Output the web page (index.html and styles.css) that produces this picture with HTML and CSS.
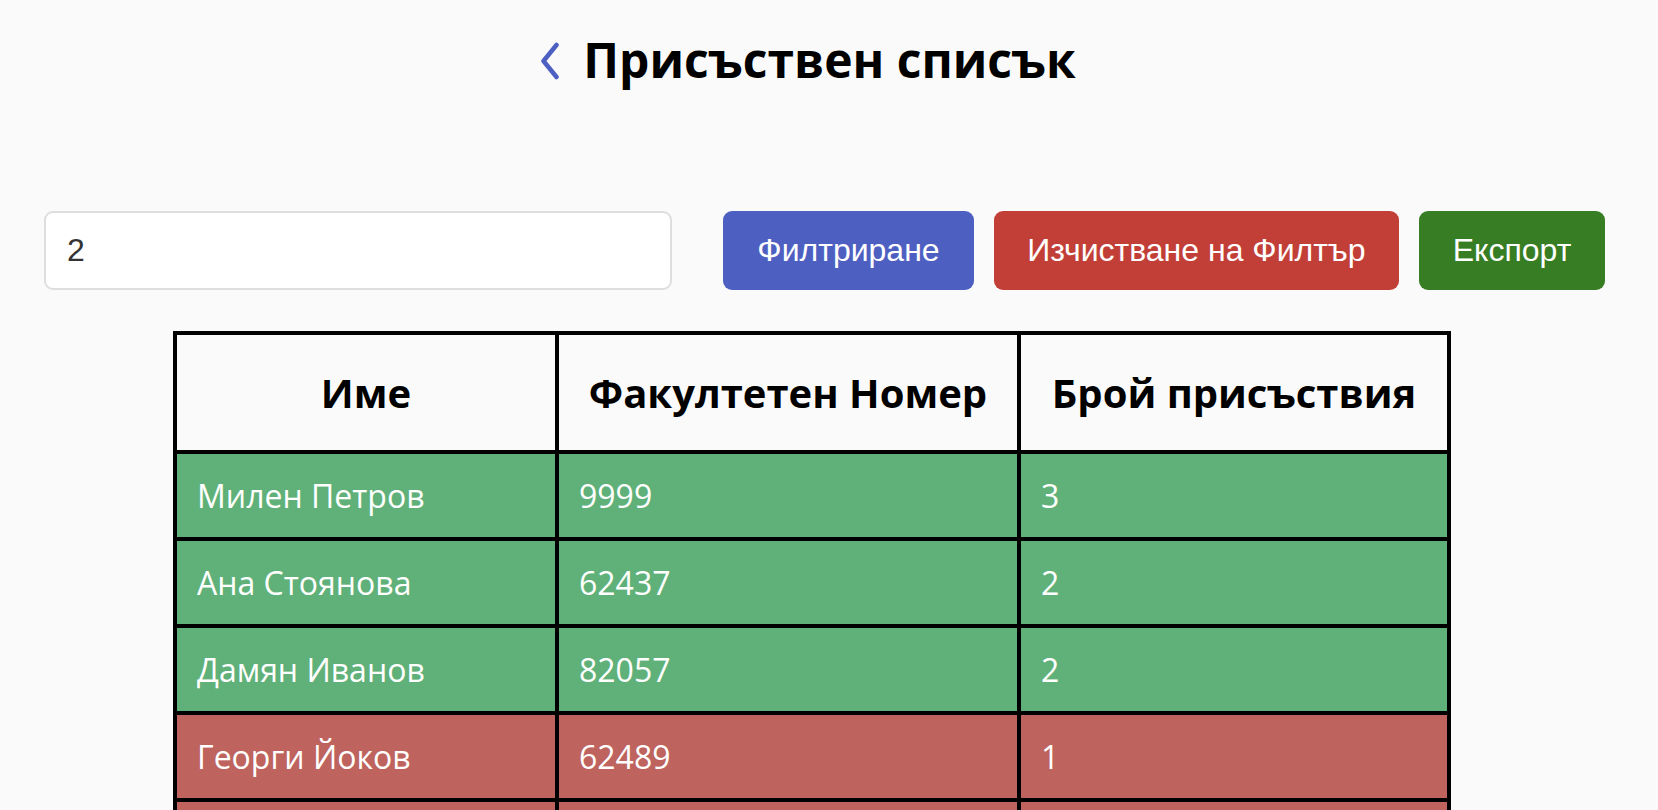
FILE: index.html
```html
<!DOCTYPE html>
<html lang="bg">
<head>
<meta charset="utf-8">
<title>Присъствен списък</title>
<link rel="stylesheet" href="styles.css">
</head>
<body>
<div class="page">
  <header class="header">
    <a class="back" href="#" aria-label="Назад">
      <svg width="20" height="38" viewBox="0 0 20 38"><path d="M16.5 3 L3.5 19 L16.5 35" fill="none" stroke="#4e5fc2" stroke-width="4.5" stroke-linecap="round" stroke-linejoin="round"/></svg>
    </a>
    <h1 class="title">Присъствен списък</h1>
  </header>

  <div class="toolbar">
    <input class="search" type="text" value="2">
    <div class="actions">
      <button class="btn btn-blue">Филтриране</button>
      <button class="btn btn-red">Изчистване на Филтър</button>
      <button class="btn btn-green">Експорт</button>
    </div>
  </div>

  <table class="list">
    <colgroup>
      <col class="c1"><col class="c2"><col class="c3">
    </colgroup>
    <thead>
      <tr><th>Име</th><th>Факултетен Номер</th><th>Брой присъствия</th></tr>
    </thead>
    <tbody>
      <tr class="ok"><td>Милен Петров</td><td>9999</td><td>3</td></tr>
      <tr class="ok"><td>Ана Стоянова</td><td>62437</td><td>2</td></tr>
      <tr class="ok"><td>Дамян Иванов</td><td>82057</td><td>2</td></tr>
      <tr class="bad"><td>Георги Йоков</td><td>62489</td><td>1</td></tr>
      <tr class="bad"><td></td><td></td><td></td></tr>
    </tbody>
  </table>
</div>
</body>
</html>
```

FILE: styles.css
```css
html, body {
  margin: 0;
  background: #fafafa;
}
body {
  font-family: "Open Sans", "Liberation Sans", sans-serif;
  color: #000;
}
.page {
  width: 1620px;
}
.header {
  display: flex;
  justify-content: center;
  align-items: center;
  gap: 23px;
  height: 120px;
  padding-right: 4px;
}
.back {
  display: flex;
  align-items: center;
  margin-top: 2px;
}
.title {
  margin: 0;
  font-size: 48px;
  font-weight: 700;
  line-height: 1;
}
.toolbar {
  display: flex;
  align-items: center;
  padding: 91px 0 0 44px;
  gap: 51px;
}
.search {
  box-sizing: border-box;
  width: 628px;
  height: 79px;
  border: 2px solid #dedede;
  border-radius: 9px;
  background: #fff;
  padding: 0 21px;
  font-family: "Liberation Sans", Arial, sans-serif;
  font-size: 32px;
  color: #333;
  outline: none;
}
.actions {
  display: flex;
  gap: 20px;
}
.btn {
  height: 79px;
  border: 0;
  border-radius: 9px;
  color: #fff;
  font-family: "Liberation Sans", Arial, sans-serif;
  font-size: 32px;
  padding: 0;
}
.btn-blue { background: #4e5fc2; width: 251px; }
.btn-red { background: #c23f37; width: 405px; }
.btn-green { background: #367d23; width: 186px; }

.list {
  margin: 41px 0 0 173px;
  width: 1274px;
  table-layout: fixed;
  border-collapse: separate;
  border-spacing: 0;
  border: 2px solid #000;
}
.c1 { width: 382px; }
.c2 { width: 462px; }
.c3 { width: 430px; }
.list th, .list td {
  border: 2px solid #000;
}
.list th {
  height: 115px;
  font-size: 40px;
  font-weight: 700;
  text-align: center;
  background: #fafafa;
  padding: 0;
}
.list td {
  height: 83px;
  padding: 0 20px;
  font-size: 32px;
  color: #fff;
  text-align: left;
}
.ok td { background: #5fb179; }
.bad td { background: #be635e; }
```
